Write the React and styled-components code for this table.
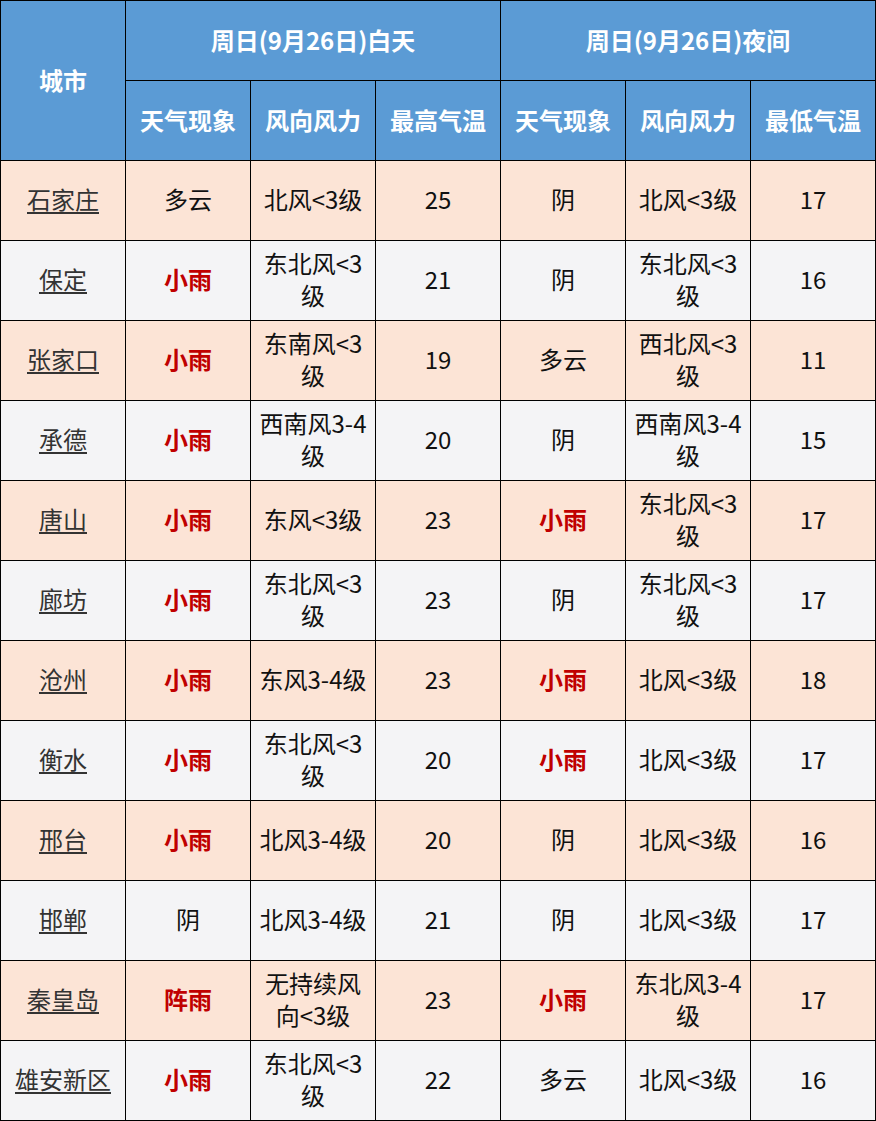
import styled, { createGlobalStyle } from "styled-components";

const GlobalStyle = createGlobalStyle`
  html, body {
    margin: 0;
    padding: 0;
    background: #ffffff;
  }
  body {
    font-family: "Noto Sans CJK SC", "Noto Sans", sans-serif;
  }
`;

// each row: city, day weather, day wind, high, night weather, night wind, low
const rows = [
  ["石家庄", "多云", "北风<3级", "25", "阴", "北风<3级", "17"],
  ["保定", "小雨", "东北风<3级", "21", "阴", "东北风<3级", "16"],
  ["张家口", "小雨", "东南风<3级", "19", "多云", "西北风<3级", "11"],
  ["承德", "小雨", "西南风3-4级", "20", "阴", "西南风3-4级", "15"],
  ["唐山", "小雨", "东风<3级", "23", "小雨", "东北风<3级", "17"],
  ["廊坊", "小雨", "东北风<3级", "23", "阴", "东北风<3级", "17"],
  ["沧州", "小雨", "东风3-4级", "23", "小雨", "北风<3级", "18"],
  ["衡水", "小雨", "东北风<3级", "20", "小雨", "北风<3级", "17"],
  ["邢台", "小雨", "北风3-4级", "20", "阴", "北风<3级", "16"],
  ["邯郸", "阴", "北风3-4级", "21", "阴", "北风<3级", "17"],
  ["秦皇岛", "阵雨", "无持续风向<3级", "23", "小雨", "东北风3-4级", "17"],
  ["雄安新区", "小雨", "东北风<3级", "22", "多云", "北风<3级", "16"],
];

const isRain = (w) => w.includes("雨");

function App() {
  return (
    <>
      <GlobalStyle />
      <Table>
        <HeadCell $rowSpan={2}>城市</HeadCell>
        <HeadCell $colSpan={3}>周日(9月26日)白天</HeadCell>
        <HeadCell $colSpan={3}>周日(9月26日)夜间</HeadCell>
        <HeadCell>天气现象</HeadCell>
        <HeadCell>风向风力</HeadCell>
        <HeadCell>最高气温</HeadCell>
        <HeadCell>天气现象</HeadCell>
        <HeadCell>风向风力</HeadCell>
        <HeadCell>最低气温</HeadCell>
        {rows.map((r, i) => {
          const shade = i % 2 === 0 ? "peach" : "grey";
          return [
            <Cell key={i + "c"} $shade={shade}>
              <CityLink>{r[0]}</CityLink>
            </Cell>,
            ...r.slice(1).map((v, j) => (
              <Cell
                key={i + "-" + j}
                $shade={shade}
                $rain={(j === 0 || j === 3) && isRain(v)}
              >
                {v}
              </Cell>
            )),
          ];
        })}
      </Table>
    </>
  );
}

export default App;

const Table = styled.div`
  display: grid;
  grid-template-columns: repeat(7, 124px);
  grid-auto-rows: 79px;
  gap: 1px;
  padding: 1px;
  width: 876px;
  box-sizing: border-box;
  background-color: #000000;
`;

const HeadCell = styled.div`
  grid-row: ${(props) => (props.$rowSpan ? `span ${props.$rowSpan}` : "auto")};
  grid-column: ${(props) =>
    props.$colSpan ? `span ${props.$colSpan}` : "auto"};
  background-color: #5b9bd5;
  color: #ffffff;
  font-size: 24px;
  font-weight: 700;
  padding-bottom: 3px;
  display: flex;
  align-items: center;
  justify-content: center;
  text-align: center;
`;

const Cell = styled.div`
  background-color: ${(props) =>
    props.$shade === "peach" ? "#fce4d6" : "#f4f4f6"};
  color: ${(props) => (props.$rain ? "#c00000" : "#111111")};
  font-weight: ${(props) => (props.$rain ? 700 : 400)};
  font-size: 24px;
  line-height: 32px;
  padding: 0 4px 3px;
  display: flex;
  align-items: center;
  justify-content: center;
  text-align: center;
`;

const CityLink = styled.span`
  color: #333333;
  text-decoration: underline;
  text-underline-offset: 3px;
`;
